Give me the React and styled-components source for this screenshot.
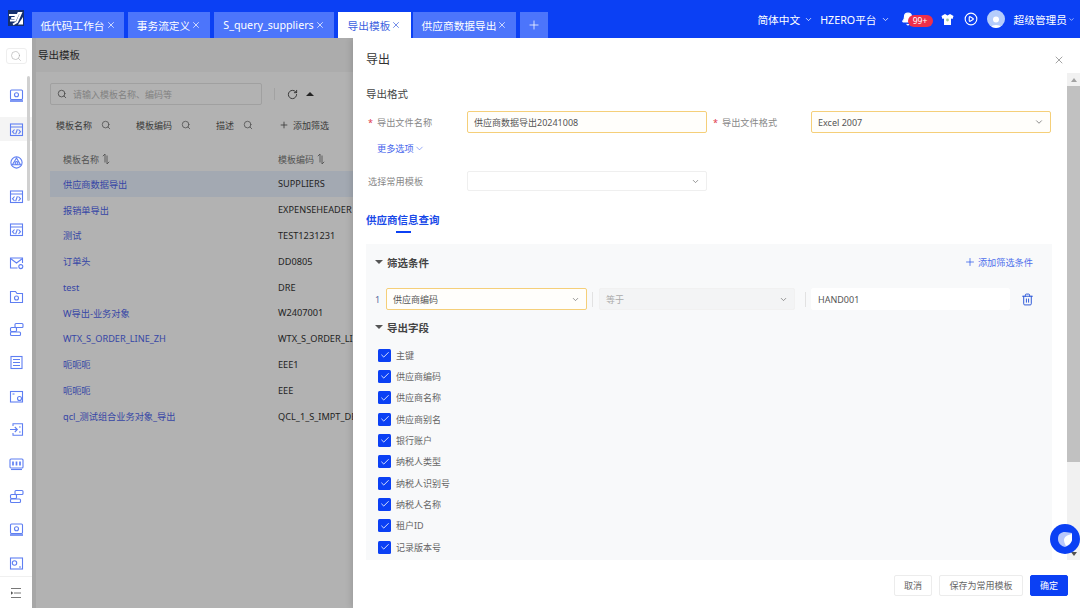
import React from 'react';
import styled, { createGlobalStyle } from 'styled-components';
import { ChevronDown, X, Plus, Search, RotateCw, Trash2, Check, CirclePlay, Bell } from 'lucide-react';

const Global = createGlobalStyle`
  html, body { margin: 0; padding: 0; }
  body { font-family: "Noto Sans", "Noto Sans CJK SC", sans-serif; font-size: 9px; color: #333; overflow: hidden; }
  * { box-sizing: border-box; }
`;

const Shell = styled.div`width: 1080px; height: 608px; display: flex; flex-direction: column; overflow: hidden; background: #fff;`;

const Header = styled.header`height: 38px; flex: none; background: #0b40f4; display: flex; align-items: flex-end; padding-left: 8px;`;
const LogoBox = styled.div`width: 16px; height: 16px; margin-bottom: 12px; margin-right: 8px; flex: none;`;
const Tabs = styled.div`display: flex; gap: 4px; height: 26px;`;
const Tab = styled.div`
  height: 26px; width: ${p => p.$w}px; display: flex; align-items: center; justify-content: center; gap: 1px; font-size: 10.7px; white-space: nowrap;
  color: ${p => (p.$active ? '#3b5fe0' : '#fff')}; background: ${p => (p.$active ? '#fff' : '#4c75fb')};
  margin-right: ${p => p.$mr || 0}px;
`;
const Right = styled.div`margin-left: auto; height: 38px; display: flex; align-items: center; color: #fff; font-size: 10.7px; padding-right: 5px;`;
const HeadItem = styled.span`display: inline-flex; align-items: center; gap: ${p => p.$gap ?? 4}px; margin-right: ${p => p.$mr || 0}px; white-space: nowrap;`;
const BellWrap = styled.span`position: relative; display: inline-flex; width: 30px; height: 20px; margin-right: 10px; align-items: center;`;
const Badge = styled.span`position: absolute; left: 7px; top: 6px; height: 12px; width: 25px; border-radius: 6px; background: #ee2f4a; color: #fff; font-size: 8.5px; line-height: 12px; text-align: center;`;
const Avatar = styled.span`width: 18px; height: 18px; border-radius: 50%; background: #b5cdfb; margin-right: 9px; display: inline-flex; overflow: hidden; align-items: flex-end; justify-content: center;`;

const Body = styled.div`flex: 1; display: flex; min-height: 0;`;
const Side = styled.aside`width: 32px; flex: none; position: relative; background: #fff; display: flex; flex-direction: column; align-items: center; padding-top: 10px;`;
const SideSearch = styled.div`width: 21px; height: 21px; border: 1px solid #eee; border-radius: 3px; display: flex; align-items: center; justify-content: center; color: #aaa; margin-bottom: 15px;`;
const SideItem = styled.div`
  width: 32px; height: 33.4px; flex: none; display: flex; align-items: center; justify-content: center;
  ${p => p.$active && 'background: linear-gradient(#f4f4f4, #f4f4f4) center / 100% 24px no-repeat;'}
`;
const SideThumb = styled.div`position: absolute; left: 27px; top: 38px; width: 3px; height: 125px; background: #d0d0d0; border-radius: 2px;`;
const SideFoot = styled.div`margin-top: -4px; width: 32px; height: 32px; flex: none; display: flex; align-items: center; justify-content: center; border-top: 1px solid #f0f0f0;`;

const Main = styled.main`flex: 1; position: relative; min-width: 0; background: #f0f0f0; padding-left: 4px; overflow: hidden;`;
const PageTitle = styled.div`height: 34px; font-size: 10.5px; line-height: 34px; padding-left: 2px; color: #333; background: #f7f7f7; white-space: nowrap;`;
const PageCard = styled.div`background: #fff; height: 536px; padding: 11px 0 0 14px; white-space: nowrap;`;
const SearchRow = styled.div`display: flex; align-items: center; height: 22px;`;
const SearchBox = styled.div`width: 212px; height: 22px; border: 1px solid #e6e6e6; border-radius: 2px; background: #fff; display: flex; align-items: center; gap: 6px; padding-left: 6px; color: #bbb; font-size: 9px; & svg { color: #666; }`;
const SepV = styled.span`width: 1px; height: 12px; background: #e8e8e8; margin: 0 ${p => p.$m || 12}px;`;
const Caret = styled.span`width: 0; height: 0; border-left: 4px solid transparent; border-right: 4px solid transparent; border-bottom: 4.5px solid #333; margin-left: ${p => p.$ml || 0}px;`;
const FilterRow = styled.div`display: flex; align-items: center; height: 22px; margin-top: 9px; padding-left: 6px; font-size: 9px; color: #555;`;
const FilterItem = styled.span`display: inline-flex; align-items: center; width: ${p => p.$w}px; gap: ${p => p.$gap ?? 9}px;`;
const TableHead = styled.div`display: flex; align-items: center; height: 24px; margin-top: 11px; color: #777; font-size: 9px;`;
const ColA = styled.div`width: 228px; padding-left: 13px; display: flex; align-items: center; gap: 3px; flex: none;`;
const ColB = styled.div`flex: none; display: flex; align-items: center; gap: 3px;`;
const Row = styled.div`display: flex; align-items: center; height: 25.8px; font-size: 9.2px; background: ${p => (p.$sel ? '#eaf2ff' : 'transparent')}; & > ${ColA} { color: #4f66ee; }`;
const Mask = styled.div`position: absolute; inset: 0; background: rgba(0, 0, 0, 0.3);`;

const Drawer = styled.section`position: absolute; left: 321px; top: 0; bottom: 0; width: 727px; background: #fff; display: flex; flex-direction: column; box-shadow: -2px 0 6px rgba(0,0,0,.12);`;
const DrawerHead = styled.div`height: 35px; flex: none; display: flex; align-items: center; justify-content: space-between; padding: 6px 15px 0 13px; font-size: 12px; color: #333; & svg { color: #666; margin-top: 2px; }`;
const DrawerBody = styled.div`flex: 1; min-height: 0; display: flex; position: relative;`;
const Scroll = styled.div`flex: 1; min-width: 0; padding: 13px 15px 0 13px; overflow: hidden;`;
const ScrollBar = styled.div`width: 13px; flex: none; background: #f1f1f1; display: flex; flex-direction: column; align-items: center;`;
const ScrollArrow = styled.span`width: 0; height: 0; border-left: 3.5px solid transparent; border-right: 3.5px solid transparent; margin: 5px 0 4px; ${p => (p.$down ? 'border-top: 4px solid #505050;' : 'border-bottom: 4px solid #a3a3a3;')}`;
const ScrollThumb = styled.div`width: 13px; height: 378px; background: #c1c1c1; margin-bottom: 85px;`;
const SectionTitle = styled.div`font-size: 10.5px; line-height: 16px; color: #444;`;
const FormGrid = styled.div`display: grid; grid-template-columns: 101px 240px 104px 240px; align-items: center; margin-top: 9px; height: 22px;`;
const Label = styled.label`font-size: 9.2px; color: #888; padding-left: ${p => p.$pl || 0}px; white-space: nowrap;`;
const Req = styled.span`color: #e0364c; margin-right: 4px; font-size: 9px;`;
const Field = styled.div`
  height: ${p => p.$h || 22}px; width: ${p => (p.$w ? `${p.$w}px` : 'auto')}; border: 1px solid ${p => (p.$req ? '#f5cf79' : p.$line || '#efefef')}; border-radius: 2px;
  background: ${p => (p.$req ? '#fffefb' : p.$bg || '#fff')}; display: flex; align-items: center; justify-content: space-between;
  padding: 0 6px; font-size: 9px; color: ${p => p.$c || '#555'}; flex: none; white-space: nowrap; & svg { color: #777; }
`;
const MoreLink = styled.div`display: flex; align-items: center; color: #4565ec; font-size: 9.2px; height: 16px; margin: 7px 0 0 11px;`;
const TplRow = styled.div`display: grid; grid-template-columns: 101px 240px; align-items: center; margin-top: 15px; height: 20px;`;
const QueryTab = styled.div`position: relative; width: 74px; margin-top: 20px; height: 29px; color: #1a4ae8; font-size: 10.5px; font-weight: 700; line-height: 18px; white-space: nowrap; &::after { content: ''; position: absolute; left: 30px; top: 20px; width: 15px; height: 2px; background: #0b40f4; }`;
const Panel = styled.div`height: 316px; margin-top: 4px; background: #f8f9fa; padding: 9px 19px 0 9px; overflow: hidden;`;
const PanelHead = styled.div`display: flex; align-items: center; justify-content: space-between; height: 18px;`;
const PanelTitle = styled.div`display: flex; align-items: center; gap: 4px; font-size: 10.5px; font-weight: 700; color: #444;`;
const DownCaret = styled.span`width: 0; height: 0; border-left: 4px solid transparent; border-right: 4px solid transparent; border-top: 4.5px solid #555;`;
const AddLink = styled.div`display: flex; align-items: center; gap: 2px; color: #4f6fec; font-size: 9.2px; & svg { color: #2450e8; }`;
const FilterLine = styled.div`display: flex; align-items: center; height: 22px; margin-top: 17px; font-size: 9px;`;
const LineNo = styled.span`width: 11px; color: #5b6b9e; font-size: 9px; flex: none;`;
const Divider = styled.span`width: 1px; height: 15px; background: #e2e2e2; margin: 0 ${p => p.$r}px 0 ${p => p.$l}px; flex: none;`;
const TrashBtn = styled.span`display: inline-flex; color: #2b57d8; margin-left: 11px;`;
const FieldsTitle = styled(PanelTitle)`margin-top: 8px; height: 18px;`;
const CheckList = styled.div`display: flex; flex-direction: column; margin-top: 8.5px; padding-left: 3px;`;
const CheckRow = styled.div`display: flex; align-items: center; height: 21.33px; flex: none; gap: 5px; font-size: 9px; color: #666;`;
const Box = styled.span`width: 13px; height: 13px; border-radius: 1.5px; background: #0b40f4; color: #fff; display: inline-flex; align-items: center; justify-content: center;`;
const Footer = styled.div`height: 48px; flex: none; display: flex; justify-content: flex-end; align-items: flex-start; gap: 7px; padding: 15px 12px 0 0; background: #fff;`;
const Btn = styled.button`height: 21px; width: ${p => p.$w}px; border-radius: 2px; font-family: inherit; font-size: 9px; padding: 0; border: 1px solid ${p => (p.$primary ? '#0b40f4' : '#ececec')}; background: ${p => (p.$primary ? '#0b40f4' : '#fff')}; color: ${p => (p.$primary ? '#fff' : '#666')};`;
const Float = styled.div`position: absolute; left: 697px; bottom: 54px; width: 30px; height: 30px; border-radius: 50%; background: #0b40f4; display: flex; align-items: center; justify-content: center;`;

const S = { fill: 'none', stroke: '#5f7ff2', strokeWidth: 1.1 };
const SideIcon = ({ k }) => {
  const inner = {
    screen: <><rect x="1.5" y="2" width="12" height="9.5" rx="1" {...S} /><path d="M1 13h13" {...S} strokeWidth="1.6" /><circle cx="7.5" cy="6.8" r="2" {...S} /></>,
    code: <><rect x="1.5" y="2" width="12" height="11.5" {...S} /><path d="M1.5 5h12M5.5 7.5l-2 2.3 2 2M9.5 7.5l2 2.3-2 2M8.4 7.3l-1.8 5" {...S} /></>,
    cycle: <><circle cx="7.5" cy="7.5" r="5.6" {...S} /><path d="M7.5 3l4 6.8H3.4z" {...S} /><circle cx="7.5" cy="8" r="1.4" {...S} /></>,
    mail: <><path d="M13.5 8V3h-12v10h7" {...S} /><path d="M1.5 3.5l6 4.5 6-4.5" {...S} /><circle cx="11.8" cy="11.6" r="2" {...S} /></>,
    folder: <><path d="M1.5 13.5V2.5h5l1.5 2h5.5v9z" {...S} /><circle cx="7.5" cy="9" r="2" {...S} /></>,
    flow: <><rect x="6" y="1.5" width="8" height="4" rx="1" {...S} /><rect x="1.5" y="5.5" width="6" height="4" rx="1" {...S} /><rect x="1.5" y="10" width="10" height="3.5" rx="1" {...S} /></>,
    list: <><rect x="2" y="1.5" width="11" height="12" {...S} /><path d="M4 4.5h7M4 7.5h7M4 10.5h7" {...S} /></>,
    image: <><rect x="1.5" y="2.5" width="12" height="10.5" {...S} /><path d="M3.5 5h2" {...S} /><circle cx="10.5" cy="9.5" r="2" {...S} /></>,
    enter: <><path d="M4 4V1.8h9.5v11.5H4V11" {...S} /><path d="M1 7.5h7M5.8 5l2.5 2.5L5.8 10M10 5h1.7M10 10h1.7" {...S} /></>,
    dots: <><rect x="1" y="3" width="13" height="9" rx="1" {...S} /><path d="M4 5.5v4M7.5 5.5v4M11 5.5v4" {...S} strokeWidth="1.7" /><path d="M2 13.5h11" {...S} /></>,
    gauge: <><rect x="1.5" y="2" width="12" height="11" {...S} /><circle cx="5.5" cy="7" r="2.2" {...S} /><path d="M10 11h2" {...S} /></>,
  }[k];
  return <svg width="15" height="15" viewBox="0 0 15 15">{inner}</svg>;
};

const Logo = () => (
  <svg width="16" height="16" viewBox="0 0 16 16">
    <rect width="16" height="16" fill="#15306e" />
    <path d="M1 5h7.5L7 8H3.2M2 10.5h5L10.5 3H13L9 12l-4 2.5" fill="none" stroke="#fff" strokeWidth="2" />
    <path d="M10 14.5L15 7v7.5z" fill="#fff" />
  </svg>
);

const Shirt = () => (
  <svg width="13" height="13" viewBox="0 0 13 13">
    <path d="M4 1L.5 3l1 3L3 5.5V12h7V5.5l1.5.5 1-3L9 1 6.5 2.5z" fill="#fff" />
    <circle cx="6.5" cy="7" r="1.4" fill="#9cc89a" />
  </svg>
);

const SortIcon = () => (
  <svg width="8" height="12" viewBox="0 0 8 12">
    <path d="M3 9.5V1L.8 3.2M5 2.5V11l2.2-2.2" fill="none" stroke="#777" strokeWidth=".9" />
  </svg>
);

const tabs = [
  ['低代码工作台', 92], ['事务流定义', 82], ['S_query_suppliers', 120], ['导出模板', 73, true, 2], ['供应商数据导出', 103],
];
const sideIcons = ['screen', 'code', 'cycle', 'code', 'code', 'mail', 'folder', 'flow', 'list', 'image', 'enter', 'dots', 'flow', 'screen', 'gauge'];
const rows = [
  ['供应商数据导出', 'SUPPLIERS'], ['报销单导出', 'EXPENSEHEADER'], ['测试', 'TEST1231231'], ['订单头', 'DD0805'], ['test', 'DRE'],
  ['W导出-业务对象', 'W2407001'], ['WTX_S_ORDER_LINE_ZH', 'WTX_S_ORDER_LINE'], ['呃呃呃', 'EEE1'], ['呃呃呃', 'EEE'], ['qcl_测试组合业务对象_导出', 'QCL_1_S_IMPT_DEMO'],
];
const fields = ['主键', '供应商编码', '供应商名称', '供应商别名', '银行账户', '纳税人类型', '纳税人识别号', '纳税人名称', '租户ID', '记录版本号'];

export default function App() {
  return (
    <Shell>
      <Global />
      <Header>
        <LogoBox><Logo /></LogoBox>
        <Tabs>
          {tabs.map(([t, w, a, mr]) => (
            <Tab key={t} $w={w} $active={a} $mr={mr ? -2 : 0}>{t}<X size={10} strokeWidth={1.7} /></Tab>
          ))}
          <Tab $w={28}><Plus size={14} strokeWidth={1.3} /></Tab>
        </Tabs>
        <Right>
          <HeadItem $mr={7}>简体中文<ChevronDown size={9} strokeWidth={2} /></HeadItem>
          <HeadItem $mr={11}>HZERO平台<ChevronDown size={9} strokeWidth={2} /></HeadItem>
          <BellWrap><Bell size={14} fill="#fff" /><Badge>99+</Badge></BellWrap>
          <HeadItem $mr={10}><Shirt /></HeadItem>
          <HeadItem $mr={9}><CirclePlay size={14} strokeWidth={1.9} /></HeadItem>
          <Avatar><svg width="14" height="14" viewBox="0 0 14 14"><circle cx="7" cy="5.5" r="3" fill="#fff" /><path d="M1 14c1-4 11-4 12 0z" fill="#fff" /></svg></Avatar>
          <HeadItem $gap={1}>超级管理员<ChevronDown size={7} strokeWidth={2} /></HeadItem>
        </Right>
      </Header>
      <Body>
        <Side>
          <SideSearch><Search size={12} strokeWidth={1.2} /></SideSearch>
          {sideIcons.map((k, i) => <SideItem key={i} $active={i === 1}><SideIcon k={k} /></SideItem>)}
          <SideFoot>
            <svg width="12" height="12" viewBox="0 0 12 12"><path d="M1 1.5h10M4 6h7M1 10.5h10" fill="none" stroke="#777" /><path d="M1 4.2L3.3 6 1 7.8z" fill="#555" /></svg>
          </SideFoot>
          <SideThumb />
        </Side>
        <Main>
          <PageTitle>导出模板</PageTitle>
          <PageCard>
            <SearchRow>
              <SearchBox><Search size={10} />请输入模板名称、编码等</SearchBox>
              <SepV $m={12} />
              <RotateCw size={11} color="#444" />
              <Caret $ml={8} />
            </SearchRow>
            <FilterRow>
              <FilterItem $w={80}>模板名称<Search size={10} color="#777" /></FilterItem>
              <FilterItem $w={80}>模板编码<Search size={10} color="#777" /></FilterItem>
              <FilterItem $w={63}>描述<Search size={10} color="#777" /></FilterItem>
              <FilterItem $w={70} $gap={4}><Plus size={10} />添加筛选</FilterItem>
            </FilterRow>
            <TableHead>
              <ColA>模板名称<SortIcon /></ColA>
              <ColB>模板编码<SortIcon /></ColB>
            </TableHead>
            {rows.map(([a, b], i) => (
              <Row key={i} $sel={i === 0}><ColA>{a}</ColA><ColB>{b}</ColB></Row>
            ))}
          </PageCard>
          <Mask />
          <Drawer>
            <DrawerHead>导出<X size={12} strokeWidth={1.2} /></DrawerHead>
            <DrawerBody>
              <Scroll>
                <SectionTitle>导出格式</SectionTitle>
                <FormGrid>
                  <Label $pl={2}><Req>*</Req>导出文件名称</Label>
                  <Field $req>供应商数据导出20241008</Field>
                  <Label $pl={6}><Req>*</Req>导出文件格式</Label>
                  <Field $req>Excel 2007<ChevronDown size={10} /></Field>
                </FormGrid>
                <MoreLink>更多选项<ChevronDown size={11} strokeWidth={1.2} /></MoreLink>
                <TplRow>
                  <Label $pl={2}>选择常用模板</Label>
                  <Field $h={20}>&nbsp;<ChevronDown size={9} /></Field>
                </TplRow>
                <QueryTab>供应商信息查询</QueryTab>
                <Panel>
                  <PanelHead>
                    <PanelTitle><DownCaret />筛选条件</PanelTitle>
                    <AddLink><Plus size={12} strokeWidth={1.4} />添加筛选条件</AddLink>
                  </PanelHead>
                  <FilterLine>
                    <LineNo>1</LineNo>
                    <Field $req $w={201}>供应商编码<ChevronDown size={9} /></Field>
                    <Divider $l={5} $r={6} />
                    <Field $w={196} $bg="#f3f4f5" $c="#aaa" $line="#f1f1f1">等于<ChevronDown size={9} /></Field>
                    <Divider $l={10} $r={5} />
                    <Field $w={199} $line="#fff">HAND001</Field>
                    <TrashBtn><Trash2 size={13} strokeWidth={1.8} /></TrashBtn>
                  </FilterLine>
                  <FieldsTitle><DownCaret />导出字段</FieldsTitle>
                  <CheckList>
                    {fields.map(f => (
                      <CheckRow key={f}><Box><Check size={10} strokeWidth={2} /></Box>{f}</CheckRow>
                    ))}
                  </CheckList>
                </Panel>
              </Scroll>
              <ScrollBar>
                <ScrollArrow />
                <ScrollThumb />
                <ScrollArrow $down />
              </ScrollBar>
            </DrawerBody>
            <Footer>
              <Btn $w={38}>取消</Btn>
              <Btn $w={84}>保存为常用模板</Btn>
              <Btn $w={38} $primary>确定</Btn>
            </Footer>
            <Float>
              <svg width="20" height="20" viewBox="0 0 20 20">
                <path d="M3 10c0-5 3-7 7-7 3 0 5 1 7 1v7c-1 4-4 6-7 7-4-1-7-4-7-8z" fill="#b9c8fb" />
                <path d="M9 11c0-3 3-5 8-6v6c-1 3-3 5-6 6-1-2-2-4-2-6z" fill="#fff" />
              </svg>
            </Float>
          </Drawer>
        </Main>
      </Body>
    </Shell>
  );
}
